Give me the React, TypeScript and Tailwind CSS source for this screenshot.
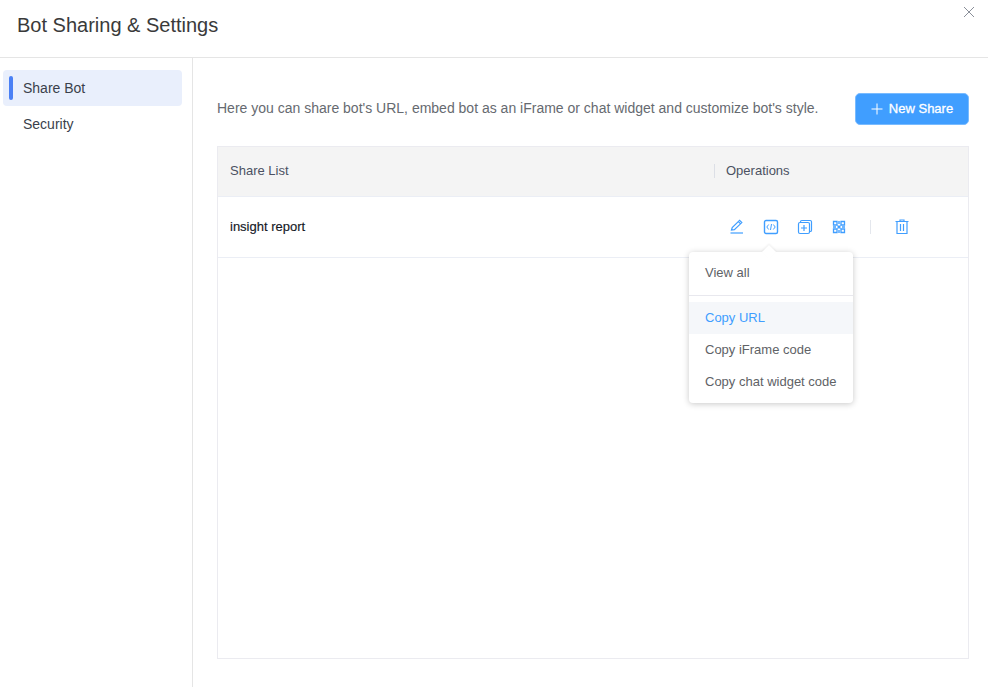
import React from "react";

const Icon = ({ children }: { children: React.ReactNode }) => (
  <button className="flex h-[18px] w-[18px] items-center justify-center">
    <svg width="16" height="16" viewBox="0 0 16 16" fill="none" stroke="#409eff" strokeWidth="1.2">
      {children}
    </svg>
  </button>
);

export default function App() {
  return (
    <div className="relative flex h-[687px] w-[988px] flex-col overflow-hidden bg-white font-['Liberation_Sans',sans-serif] text-[14px]">
      <header className="flex h-[58px] shrink-0 items-center border-b border-[#e5e5e5] pb-[7px] pl-[17px]">
        <h1 className="text-[20px] font-normal leading-[28px] text-[#3a3a3a]">Bot Sharing &amp; Settings</h1>
      </header>
      <button className="absolute right-[13px] top-[6px] h-[12px] w-[12px]">
        <svg width="12" height="12" viewBox="0 0 12 12" stroke="#8a8f99" strokeWidth="1">
          <path d="M1 1L11 11M11 1L1 11" />
        </svg>
      </button>
      <div className="flex min-h-0 flex-1">
        <aside className="flex w-[193px] shrink-0 flex-col border-r border-[#e5e5e5] pl-[3px] pr-[10px] pt-[12px]">
          <div className="flex h-[36px] items-center rounded-[4px] bg-[#e9effc] pl-[6px] text-[#3a3f4b]">
            <span className="mr-[10px] h-[24px] w-[4px] rounded-[2px] bg-[#4a80f5]" />
            Share Bot
          </div>
          <div className="flex h-[36px] items-center pl-[20px] text-[#3a3f4b]">Security</div>
        </aside>
        <main className="flex min-w-0 flex-1 flex-col pb-[28px] pl-[24px] pr-[19px] pt-[34px]">
          <div className="flex h-[33px] items-center justify-between">
            <p className="text-[#666a70]">Here you can share bot's URL, embed bot as an iFrame or chat widget and customize bot's style.</p>
            <button className="mt-[1px] flex h-[32px] w-[114px] items-center justify-center gap-[6px] rounded-[5px] border border-[#79bbff] bg-[#409eff] text-[13px] text-white [-webkit-text-stroke:0.3px_white]">
              <svg width="12" height="12" viewBox="0 0 12 12" stroke="#fff" strokeWidth="1">
                <path d="M6 0.5V11.5M0.5 6H11.5" />
              </svg>
              New Share
            </button>
          </div>
          <div className="mt-[21px] flex min-h-0 flex-1 flex-col border border-[#ebebf0]">
            <div className="flex h-[50px] shrink-0 items-center border-b border-[#ebeef5] bg-[#f4f4f4] pb-[2px] text-[13px] text-[#4b5162]">
              <div className="w-[496px] pl-[12px]">Share List</div>
              <div className="h-[14px] w-px bg-[#dcdfe6]" />
              <div className="pl-[11px]">Operations</div>
            </div>
            <div className="flex h-[61px] shrink-0 items-center border-b border-[#ebeef5]">
              <div className="w-[510px] pl-[12px] text-[13px] text-[#14181f] [-webkit-text-stroke:0.15px_#14181f]">insight report</div>
              <div className="flex items-center gap-[16px]">
                <Icon>
                  <path d="M2.5 11L3.2 8.6L10.6 1.4L12.8 3.6L5.4 10.6L2.5 11Z M9.4 2.6L11.6 4.8" />
                  <path d="M1.5 14H14" />
                </Icon>
                <Icon>
                  <rect x="1.5" y="1.5" width="13" height="13" rx="1.5" strokeWidth="1.4" />
                  <path d="M5.7 5.5L3.8 8L5.7 10.5M10.3 5.5L12.2 8L10.3 10.5M8.5 5L7.5 11" strokeWidth="1" />
                </Icon>
                <Icon>
                  <rect x="1.5" y="3.5" width="11" height="11" rx="1.5" />
                  <path d="M3.5 3.5V2.8C3.5 2 4 1.5 4.8 1.5H13.2C14 1.5 14.5 2 14.5 2.8V11.2C14.5 12 14 12.5 13.2 12.5H12.5" />
                  <path d="M7 6V12M4 9H10" />
                </Icon>
                <Icon>
                  <path d="M2.5 2.5H6V6H2.5ZM10 2.5H13.5V6H10ZM2.5 10H6V13.5H2.5ZM10 10H13.5V13.5H10Z" strokeWidth="1.3" />
                  <path d="M6.5 6.5L9.5 9.5M9.5 6.5L6.5 9.5M8 2V5M8 11V14M2 8H5M11 8H14" strokeWidth="1.4" />
                </Icon>
                <div className="mx-[6px] h-[14px] w-px bg-[#e4e7ed]" />
                <Icon>
                  <path d="M1.5 2.5H14.5M3 2.5V14.5H13V2.5M6 2.5V1H10V2.5M6.5 5V12M9.5 5V12" />
                </Icon>
              </div>
            </div>
          </div>
        </main>
      </div>
      <div className="absolute left-[689px] top-[252px] w-[164px] rounded-[4px] bg-white pb-[5px] pt-[4px] text-[13px] text-[#606266] shadow-[0_1px_6px_rgba(0,0,0,0.22)]">
        <span className="absolute left-[75px] top-[-5px] h-[10px] w-[10px] rotate-45 bg-white shadow-[-1px_-1px_2px_rgba(0,0,0,0.06)]" />
        <div className="relative flex h-[32px] items-center pl-[16px] pt-[2px]">View all</div>
        <div className="mb-[6px] mt-[7px] border-t border-[#e8e8ee]" />
        <div className="flex h-[32px] items-center bg-[#f5f7fa] pl-[16px] text-[#409eff]">Copy URL</div>
        <div className="flex h-[32px] items-center pl-[16px]">Copy iFrame code</div>
        <div className="flex h-[32px] items-center pb-[1px] pl-[16px]">Copy chat widget code</div>
      </div>
    </div>
  );
}
